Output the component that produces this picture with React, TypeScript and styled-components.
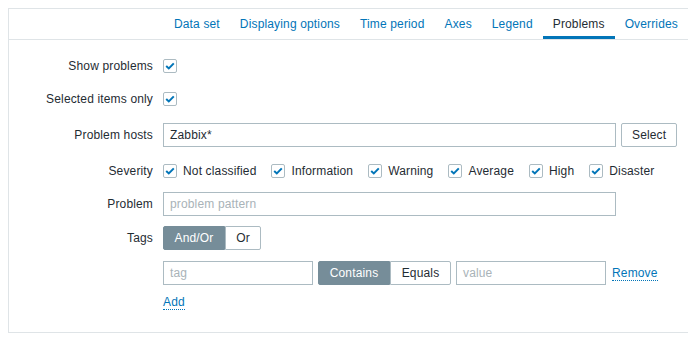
import React from 'react';
import styled, { createGlobalStyle } from 'styled-components';

const GlobalStyle = createGlobalStyle`
  html, body {
    margin: 0;
    padding: 0;
    background: #ffffff;
  }

  body {
    padding: 8px 0 0 8px;
    font-family: 'Liberation Sans', Arial, sans-serif;
    font-size: 12px;
    letter-spacing: 0.15px;
    color: #1f2c33;
  }
`;

const Panel = styled.div`
  border: 1px solid #dfe4e7;
  border-right: none;
  height: 325px;
  box-sizing: border-box;
  background: #ffffff;
`;

const TabBar = styled.ul`
  display: flex;
  justify-content: flex-end;
  margin: 0;
  padding: 0;
  list-style: none;
  border-bottom: 1px solid #dfe4e7;
`;

const Tab = styled.li<{ $active?: boolean }>`
  height: 30px;
  box-sizing: border-box;
  padding: 3px 10px 0;
  display: flex;
  align-items: center;
  color: ${({ $active }) => ($active ? '#1f2c33' : '#0275b8')};
  border-bottom: 3px solid ${({ $active }) => ($active ? '#0275b8' : 'transparent')};
  cursor: pointer;
`;

const Form = styled.div`
  display: grid;
  grid-template-columns: 144px 1fr;
  column-gap: 10px;
  padding: 14px 0 0;
  align-items: center;
`;

const Label = styled.div<{ $top: number }>`
  text-align: right;
  margin-top: ${({ $top }) => $top}px;
  line-height: 24px;
  white-space: nowrap;
`;

const Field = styled.div<{ $top: number }>`
  display: flex;
  align-items: center;
  min-height: 24px;
  margin-top: ${({ $top }) => $top}px;
`;

const Box = styled.span`
  width: 14px;
  height: 14px;
  box-sizing: border-box;
  border: 1px solid #acbbc2;
  border-radius: 2px;
  display: inline-flex;
  align-items: center;
  justify-content: center;
  background: #ffffff;
  flex: none;
`;

const CheckItem = styled.label`
  display: inline-flex;
  align-items: center;
  gap: 6px;
  margin-right: 15px;
  white-space: nowrap;

  &:last-child {
    margin-right: 0;
  }
`;

const Input = styled.div<{ $width: number; $placeholder?: boolean }>`
  width: ${({ $width }) => $width}px;
  height: 24px;
  box-sizing: border-box;
  border: 1px solid #acbbc2;
  padding: 0 6px;
  display: flex;
  align-items: center;
  color: ${({ $placeholder }) => ($placeholder ? '#a9b3b8' : '#1f2c33')};
  background: #ffffff;
`;

const Button = styled.div`
  height: 24px;
  box-sizing: border-box;
  border: 1px solid #acbbc2;
  border-radius: 2px;
  padding: 0 10px;
  margin-left: 5px;
  display: flex;
  align-items: center;
  background: #ffffff;
`;

const Segmented = styled.div<{ $gap?: number }>`
  display: flex;
  margin: 0 ${({ $gap }) => $gap ?? 0}px;
`;

const Segment = styled.div<{ $on?: boolean; $width: number }>`
  width: ${({ $width }) => $width}px;
  height: 24px;
  box-sizing: border-box;
  border: 1px solid ${({ $on }) => ($on ? '#768d99' : '#acbbc2')};
  background: ${({ $on }) => ($on ? '#768d99' : '#ffffff')};
  color: ${({ $on }) => ($on ? '#ffffff' : '#1f2c33')};
  display: flex;
  align-items: center;
  justify-content: center;

  &:first-child {
    border-radius: 2px 0 0 2px;
  }

  &:last-child {
    border-radius: 0 2px 2px 0;
  }
`;

const Link = styled.span<{ $gap?: number }>`
  color: #0275b8;
  border-bottom: 1px dotted #0275b8;
  line-height: 14px;
  margin-left: ${({ $gap }) => $gap ?? 0}px;
  cursor: pointer;
`;

const Check = () => (
  <Box>
    <svg width="10" height="8" viewBox="0 0 10 8">
      <polyline points="1.2,4 3.8,6.4 8.8,1.4" fill="none" stroke="#0275b8" strokeWidth="2" />
    </svg>
  </Box>
);

const tabs = ['Data set', 'Displaying options', 'Time period', 'Axes', 'Legend', 'Problems', 'Overrides'];
const severities = ['Not classified', 'Information', 'Warning', 'Average', 'High', 'Disaster'];

export default function App(): React.ReactElement {
  return (
    <>
      <GlobalStyle />
      <Panel>
        <TabBar>
          {tabs.map((t) => (
            <Tab key={t} $active={t === 'Problems'}>{t}</Tab>
          ))}
        </TabBar>
        <Form>
          <Label $top={0}>Show problems</Label>
          <Field $top={0}><Check /></Field>

          <Label $top={9}>Selected items only</Label>
          <Field $top={9}><Check /></Field>

          <Label $top={12}>Problem hosts</Label>
          <Field $top={12}>
            <Input $width={453}>Zabbix*</Input>
            <Button>Select</Button>
          </Field>

          <Label $top={12}>Severity</Label>
          <Field $top={12}>
            {severities.map((s) => (
              <CheckItem key={s}>
                <Check />
                {s}
              </CheckItem>
            ))}
          </Field>

          <Label $top={9}>Problem</Label>
          <Field $top={9}>
            <Input $width={453} $placeholder>problem pattern</Input>
          </Field>

          <Label $top={10}>Tags</Label>
          <Field $top={10}>
            <Segmented>
              <Segment $on $width={62}>And/Or</Segment>
              <Segment $width={36}>Or</Segment>
            </Segmented>
          </Field>

          <div />
          <Field $top={11}>
            <Input $width={150} $placeholder>tag</Input>
            <Segmented $gap={5}>
              <Segment $on $width={72}>Contains</Segment>
              <Segment $width={61}>Equals</Segment>
            </Segmented>
            <Input $width={150} $placeholder>value</Input>
            <Link $gap={6}>Remove</Link>
          </Field>

          <div />
          <Field $top={5}>
            <Link>Add</Link>
          </Field>
        </Form>
      </Panel>
    </>
  );
}
